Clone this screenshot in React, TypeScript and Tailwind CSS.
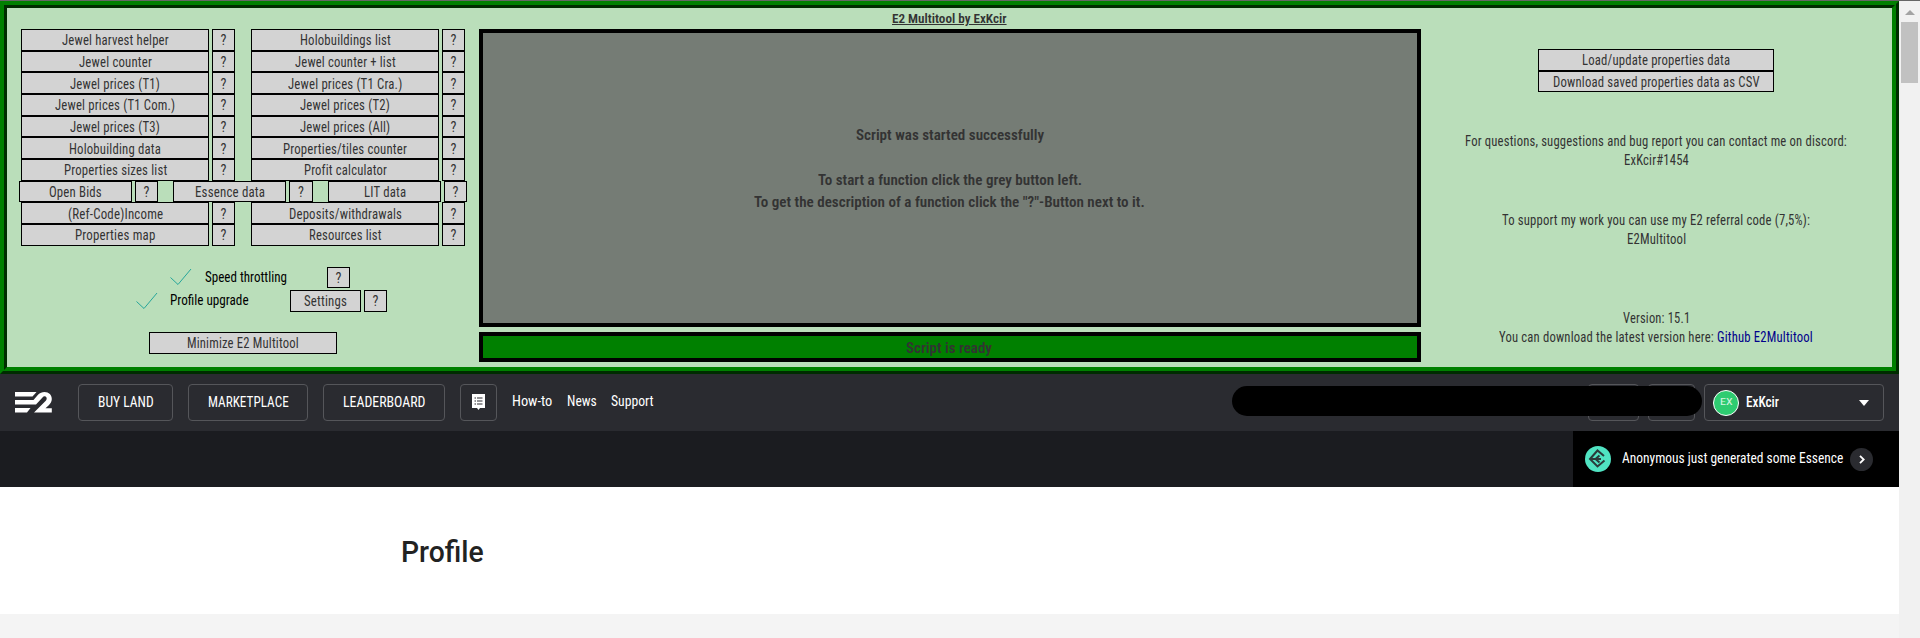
import { useLayoutEffect, useRef } from "react";

/** Single line of text condensed horizontally to a given width. */
function Fit({ w, className = "", children }: { w: number; className?: string; children: string }) {
  const ref = useRef<HTMLSpanElement>(null);
  useLayoutEffect(() => {
    const el = ref.current;
    if (el) el.style.transform = `scaleX(${w / el.offsetWidth})`;
  }, [w, children]);
  return (
    <span className="inline-flex shrink-0 justify-start" style={{ width: w }}>
      <span ref={ref} className={`inline-block shrink-0 origin-left whitespace-nowrap ${className}`}>
        {children}
      </span>
    </span>
  );
}

type Item = [string, number];

const btn =
  "flex h-full shrink-0 items-center justify-center border border-black bg-[#d3d3d3] pt-px text-[14px] leading-none tracking-[0.2px] text-[#333]";

function Button({ item, className }: { item: Item; className: string }) {
  return (
    <button className={`${btn} ${className}`}>
      <Fit w={item[1]}>{item[0]}</Fit>
    </button>
  );
}

function Help({ className = "w-[23px]" }: { className?: string }) {
  return (
    <button className={`${btn} ml-[3px] ${className}`}>
      <Fit w={6}>?</Fit>
    </button>
  );
}

function Row({ left, right }: { left: Item; right: Item }) {
  return (
    <div className="ml-[21px] flex h-[21.667px]">
      <Button item={left} className="w-[188px]" />
      <Help />
      <Button item={right} className="ml-4 w-[188px]" />
      <Help />
    </div>
  );
}

const rowsTop: [Item, Item][] = [
  [["Jewel harvest helper", 107], ["Holobuildings list", 91]],
  [["Jewel counter", 73], ["Jewel counter + list", 101]],
  [["Jewel prices (T1)", 90], ["Jewel prices (T1 Cra.)", 114]],
  [["Jewel prices (T1 Com.)", 120], ["Jewel prices (T2)", 90]],
  [["Jewel prices (T3)", 90], ["Jewel prices (All)", 90]],
  [["Holobuilding data", 92], ["Properties/tiles counter", 124]],
  [["Properties sizes list", 103], ["Profit calculator", 83]],
];

const rowsBottom: [Item, Item][] = [
  [["(Ref-Code)Income", 95], ["Deposits/withdrawals", 113]],
  [["Properties map", 80], ["Resources list", 73]],
];

function Check() {
  return (
    <svg width="22" height="18" viewBox="0 0 22 18" fill="none" stroke="#26a69a" strokeWidth="1" className="shrink-0">
      <path d="M0.5 9.5 L8 16.5 L21 1" />
    </svg>
  );
}

function Functions() {
  return (
    <section className="-ml-[7px] w-[479px] shrink-0 pt-[21px]">
      {rowsTop.map(([l, r]) => (
        <Row key={l[0]} left={l} right={r} />
      ))}
      <div className="ml-[19px] flex h-[21.667px]">
        <Button item={["Open Bids", 53]} className="w-[113px]" />
        <Help />
        <Button item={["Essence data", 70]} className="ml-[15px] w-[113px]" />
        <Help className="w-[24px]" />
        <Button item={["LIT data", 42]} className="ml-[15px] w-[113px]" />
        <Help />
      </div>
      {rowsBottom.map(([l, r]) => (
        <Row key={l[0]} left={l} right={r} />
      ))}
      <div className="mt-[21.3px] ml-[170px] flex h-[21px] items-center text-[14px] text-black">
        <Check />
        <span className="ml-[13px] flex w-[122px]">
          <Fit w={82}>Speed throttling</Fit>
        </span>
        <button className={`${btn} w-[23px]`}>
          <Fit w={6}>?</Fit>
        </button>
      </div>
      <div className="mt-[2px] ml-[136px] flex h-[22px] items-center text-[14px] text-black">
        <Check />
        <span className="ml-[12px] flex w-[120px] pb-px">
          <Fit w={79}>Profile upgrade</Fit>
        </span>
        <Button item={["Settings", 43]} className="w-[71px]" />
        <Help />
      </div>
      <div className="mt-5 ml-[149px] flex h-[22px]">
        <Button item={["Minimize E2 Multitool", 112]} className="w-[188px]" />
      </div>
    </section>
  );
}

function Output() {
  return (
    <section className="flex w-[942px] shrink-0 flex-col items-center text-[15px] font-semibold text-[#333]">
      <h1 className="flex h-[21px] items-center pr-[2px] text-[13.5px]">
        <Fit w={115} className="underline">E2 Multitool by ExKcir</Fit>
      </h1>
      <div className="flex h-[298px] w-full flex-col items-center border-4 border-black bg-[#757c75] pt-[91px] pr-px leading-[22.3px]">
        <Fit w={188}>Script was started successfully</Fit>
        <span className="h-[22.3px]" />
        <Fit w={264}>To start a function click the grey button left.</Fit>
        <Fit w={391}>To get the description of a function click the "?"-Button next to it.</Fit>
      </div>
      <div className="mt-[5px] flex h-[30px] w-full items-center justify-center border-4 border-black bg-[#008000] pt-[2px] pr-[2px] leading-none">
        <Fit w={86}>Script is ready</Fit>
      </div>
    </section>
  );
}

function Info() {
  return (
    <section className="flex w-[470px] shrink-0 flex-col items-center pt-[41px] text-[14px] leading-[19.3px] tracking-[0.2px] text-[#333]">
      <div className="flex h-[21.5px]">
        <Button item={["Load/update properties data", 148]} className="w-[236px]" />
      </div>
      <div className="flex h-[21.5px]">
        <Button item={["Download saved properties data as CSV", 207]} className="w-[236px]" />
      </div>
      <div className="mt-[40px] flex flex-col items-center">
        <Fit w={382}>For questions, suggestions and bug report you can contact me on discord:</Fit>
        <Fit w={65}>ExKcir#1454</Fit>
      </div>
      <div className="mt-[40px] flex flex-col items-center">
        <Fit w={308}>To support my work you can use my E2 referral code (7,5%):</Fit>
        <Fit w={59}>E2Multitool</Fit>
      </div>
      <div className="mt-[60px] flex flex-col items-center">
        <Fit w={67}>Version: 15.1</Fit>
        <p className="flex">
          <Fit w={215}>You can download the latest version here:</Fit>
          <a href="#" className="ml-[3px] flex text-[#00008b]">
            <Fit w={96}>Github E2Multitool</Fit>
          </a>
        </p>
      </div>
    </section>
  );
}

const navBox = "flex h-[37px] shrink-0 items-center justify-center rounded-[4px] border border-[#55565a]";

function Nav() {
  return (
    <nav className="flex h-[57px] items-center bg-[#2a2b30] pl-[15px] text-[14px] font-normal text-white">
      <svg width="37" height="21" viewBox="0 0 37 21" fill="#fff" className="shrink-0">
        <path d="M0 0H21.5L17.5 4.5H0Z" />
        <path d="M0 8H18.500L23 2.800C25 0.800 27 0 29.500 0C34 0 36.800 3 36.800 7C36.800 9.500 35.500 11.500 33.500 13.500L30.500 16.200H36.800V20.500H19L29.500 10C31 8.500 32.200 7.500 31.500 5.500C30.500 3.800 28.500 4.200 27.500 5.500L21 12.500H0Z" />
        <path d="M0 16H15.500L12 20.500H0Z" />
      </svg>
      <button className={`${navBox} ml-[26px] w-[95px]`}>
        <Fit w={56}>BUY LAND</Fit>
      </button>
      <button className={`${navBox} ml-[15px] w-[120px]`}>
        <Fit w={81}>MARKETPLACE</Fit>
      </button>
      <button className={`${navBox} ml-[15px] w-[122px]`}>
        <Fit w={82}>LEADERBOARD</Fit>
      </button>
      <button className={`${navBox} ml-[15px] w-[37px]`}>
        <svg width="13" height="16" viewBox="0 0 13 16" className="-mt-px">
          <path d="M0 0H13V14H8L6.500 16L5 14H0Z" fill="#fff" />
          <path d="M2.500 4H4M5 4H10.500M2.500 7H4M5 7H10.500M2.500 10H4M5 10H10.500" stroke="#2a2b30" strokeWidth="1.200" />
        </svg>
      </button>
      <a href="#" className="ml-[15px] flex pb-[2px]"><Fit w={40}>How-to</Fit></a>
      <a href="#" className="ml-[15px] flex pb-[2px]"><Fit w={30}>News</Fit></a>
      <a href="#" className="ml-[14px] flex pb-[2px]"><Fit w={43}>Support</Fit></a>
      <div className="relative ml-auto flex h-[37px] w-[472px] justify-end pr-[9px]">
        <span className={`${navBox} w-[51px]`} />
        <span className={`${navBox} ml-[9px] w-[47px]`} />
        <span className="absolute top-[2px] left-0 h-[30px] w-[470px] rounded-full bg-black" />
      </div>
      <button className={`${navBox} mr-[15px] w-[180px] justify-start! pl-2`}>
        <span className="flex size-[26px] items-center justify-center rounded-full border border-white bg-[#2ecc71] text-[9px] font-normal text-white/80">
          <Fit w={12}>EX</Fit>
        </span>
        <span className="ml-[7px] flex pb-px font-medium"><Fit w={33}>ExKcir</Fit></span>
        <svg width="10" height="6" viewBox="0 0 10 6" fill="#fff" className="mr-[14px] ml-auto">
          <path d="M0 0H10L5 6Z" />
        </svg>
      </button>
    </nav>
  );
}

function Ticker() {
  return (
    <div className="flex h-[56px] justify-end bg-[#1b1c20]">
      <div className="flex w-[326px] items-center bg-black pl-3 text-[14px] font-normal text-white">
        <svg width="26" height="26" viewBox="0 0 26 26" fill="none" className="shrink-0">
          <circle cx="13" cy="13" r="13" fill="#50e3c2" />
          <path
            d="M19 10L12.500 4.500L5 13L12.500 20.500L19.500 14.500M5.500 13H16M14.500 9.500L10.500 13L14.500 16.500"
            stroke="#2a3a3a"
            strokeWidth="2"
          />
        </svg>
        <span className="ml-[11px] flex pb-px"><Fit w={221}>Anonymous just generated some Essence</Fit></span>
        <span className="ml-[7px] flex size-[23px] items-center justify-center rounded-full bg-[#2a2b30]">
          <svg width="6" height="9" viewBox="0 0 6 9" fill="none" stroke="#fff" strokeWidth="1.800">
            <path d="M1 0.800L4.700 4.500L1 8.200" />
          </svg>
        </span>
      </div>
    </div>
  );
}

function Scrollbar() {
  return (
    <div className="flex w-[21px] flex-col items-center bg-[#f1f1f1] pt-[9px]">
      <svg width="10" height="5" viewBox="0 0 10 5" fill="#a3a3a3">
        <path d="M5 0L10 5H0Z" />
      </svg>
      <div className="mt-[7px] h-[61px] w-[17px] bg-[#c1c1c1]" />
    </div>
  );
}

export default function App() {
  return (
    <div className="flex h-[638px] w-[1920px] flex-col overflow-hidden border-t border-[#666] bg-white [font-family:'Roboto_Condensed',Roboto,sans-serif]">
      <div className="flex flex-1">
        <main className="flex w-[1899px] flex-col">
          <div className="flex h-[373px] shrink-0 border-[7px] border-[#008000] bg-[#badeba] [border-style:ridge]">
            <Functions />
            <Output />
            <Info />
          </div>
          <Nav />
          <Ticker />
          <div className="flex h-[127px] items-center bg-white pt-[4px] pl-[401px] text-[29px] font-medium text-[#222]">
            <Fit w={83} className="[font-family:Roboto,sans-serif]">Profile</Fit>
          </div>
          <div className="flex-1 bg-[#f4f4f4]" />
        </main>
        <Scrollbar />
      </div>
    </div>
  );
}
